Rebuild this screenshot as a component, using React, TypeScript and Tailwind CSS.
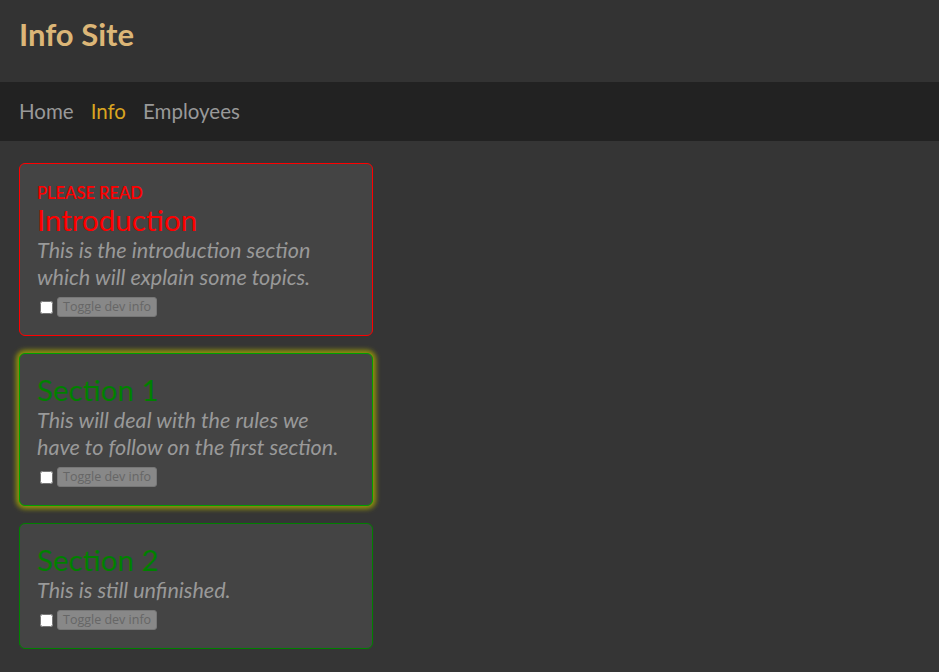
import React from "react";

const font = { fontFamily: "Lato, 'Open Sans', sans-serif" };

function Card({
  kicker,
  title,
  text,
  color,
  border,
  glow,
}: {
  kicker?: string;
  title: string;
  text: string;
  color: string;
  border: string;
  glow?: boolean;
}) {
  return (
    <div
      className={`w-[354px] rounded-[6px] border bg-[#444444] px-[17px] pt-[19px] pb-[18px] ${border} ${
        glow ? "shadow-[0_0_5px_3px_rgba(170,170,0,0.8)]" : ""
      }`}
    >
      {kicker && (
        <div className={`text-[16.5px] font-semibold leading-[20px] uppercase ${color}`}>{kicker}</div>
      )}
      <div className={`text-[29.5px] leading-[34px] ${color}`}>{title}</div>
      <div className="pr-[8px] text-[21.6px] italic leading-[27px] text-[#999999]">{text}</div>
      <div className="mt-[6px] flex items-center">
        <input type="checkbox" className="ml-[3px] mr-[4px] h-[13px] w-[13px]" />
        <button className="h-[20px] rounded-[3px] border border-[#777] bg-[#888888] px-[5px] text-[12.5px] leading-[16px] text-[#666] font-['Open_Sans',sans-serif]">
          Toggle dev info
        </button>
      </div>
    </div>
  );
}

export default function App() {
  return (
    <div className="min-h-[672px] bg-[#353535]" style={font}>
      <div className="h-[82px] bg-[#333333] px-[19px] pt-[15px]">
        <div className="text-[31px] font-bold leading-[38px] text-[#dcb677]">Info Site</div>
      </div>
      <div className="flex h-[59px] items-center gap-[17px] bg-[#222222] px-[19px] text-[20.5px]">
        <span className="text-[#999999]">Home</span>
        <span className="text-[#daa520]">Info</span>
        <span className="text-[#999999]">Employees</span>
      </div>
      <div className="flex flex-col gap-[17px] px-[19px] pt-[22px]">
        <Card
          kicker="Please read"
          title="Introduction"
          text="This is the introduction section which will explain some topics."
          color="text-[#ff0000]"
          border="border-[#ff0000]"
        />
        <Card
          title="Section 1"
          text="This will deal with the rules we have to follow on the first section."
          color="text-[#008000]"
          border="border-[#00a000]"
          glow
        />
        <Card
          title="Section 2"
          text="This is still unfinished."
          color="text-[#008000]"
          border="border-[#008000]"
        />
      </div>
    </div>
  );
}
